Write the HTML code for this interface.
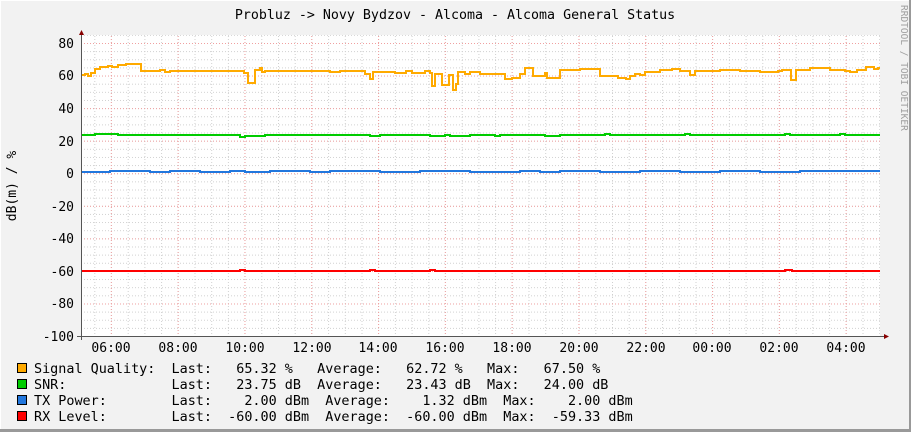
<!DOCTYPE html>
<html><head><meta charset="utf-8"><style>
html,body{margin:0;padding:0;}
body{width:911px;height:432px;overflow:hidden;background:#f2f2f2;}
svg{display:block;font-family:"DejaVu Sans Mono","Liberation Mono",monospace;}
.pre{white-space:pre;}
</style></head><body>
<svg width="911" height="432" viewBox="0 0 911 432" xmlns="http://www.w3.org/2000/svg">
<defs>
<pattern id="vmin" x="94.3" y="0" width="16.7" height="432" patternUnits="userSpaceOnUse">
<line x1="0.5" y1="0" x2="0.5" y2="432" stroke="#d0d0d0" stroke-dasharray="1,2"/></pattern>
<pattern id="hmin" x="0" y="43" width="911" height="8.14" patternUnits="userSpaceOnUse">
<line x1="0" y1="0.5" x2="911" y2="0.5" stroke="#d0d0d0" stroke-dasharray="1,2"/></pattern>
<pattern id="vmaj" x="110.8" y="0" width="66.8" height="432" patternUnits="userSpaceOnUse">
<line x1="0.5" y1="0" x2="0.5" y2="432" stroke="#f0a0a0" stroke-dasharray="1,2"/></pattern>
<pattern id="hmaj" x="0" y="43" width="911" height="32.56" patternUnits="userSpaceOnUse">
<line x1="0" y1="0.5" x2="911" y2="0.5" stroke="#f0a0a0" stroke-dasharray="1,2"/></pattern>
</defs>
<rect x="0" y="0" width="911" height="432" fill="#f2f2f2"/>
<line x1="0" y1="0.5" x2="911" y2="0.5" stroke="#fff"/>
<line x1="0.5" y1="0" x2="0.5" y2="432" stroke="#fff"/>
<line x1="0" y1="430.5" x2="911" y2="430.5" stroke="#999" stroke-width="3"/>
<line x1="910" y1="0" x2="910" y2="432" stroke="#999" stroke-width="2"/>
<rect x="81" y="35" width="799" height="301" fill="#fff"/>
<rect x="81" y="35" width="799" height="301" fill="url(#hmin)"/>
<rect x="81" y="35" width="799" height="301" fill="url(#vmin)"/>
<rect x="81" y="35" width="799" height="301" fill="url(#hmaj)"/>
<rect x="81" y="35" width="799" height="301" fill="url(#vmaj)"/>
<text x="455" y="19" font-size="13.3" text-anchor="middle" fill="#000">Probluz -&gt; Novy Bydzov - Alcoma - Alcoma General Status</text>
<text transform="translate(901,5) rotate(90)" font-size="9.5" fill="#a0a0a0">RRDTOOL / TOBI OETIKER</text>
<text transform="translate(16,186) rotate(-90)" font-size="13" text-anchor="middle" fill="#000">dB(m) / %</text>
<g font-size="13" fill="#000" text-anchor="end">
<text x="74" y="48">80</text><text x="74" y="80">60</text><text x="74" y="113">40</text>
<text x="74" y="146">20</text><text x="74" y="178">0</text><text x="74" y="211">-20</text>
<text x="74" y="243">-40</text><text x="74" y="276">-60</text><text x="74" y="308">-80</text>
<text x="74" y="341">-100</text>
</g>
<g font-size="13" fill="#000" text-anchor="middle">
<text x="111" y="352">06:00</text><text x="178" y="352">08:00</text><text x="245" y="352">10:00</text>
<text x="312" y="352">12:00</text><text x="378" y="352">14:00</text><text x="445" y="352">16:00</text>
<text x="512" y="352">18:00</text><text x="579" y="352">20:00</text><text x="646" y="352">22:00</text>
<text x="712" y="352">00:00</text><text x="779" y="352">02:00</text><text x="846" y="352">04:00</text>
</g>
<g shape-rendering="crispEdges" fill="none" stroke-width="2">
<polyline stroke="#ffaa00" points="81,75 85,75 85,74 88,74 88,76 91,76 91,73 95,73 95,69 100,69 100,67 108,67 108,66 112,66 112,67 118,67 118,65 126,65 126,64 141,64 141,71 160,71 160,70 165,70 165,72 170,72 170,71 244,71 244,73 248,73 248,83 255,83 255,70 260,70 260,68 262,68 262,72 265,72 265,71 330,71 330,72 340,72 340,71 365,71 365,74 370,74 370,79 373,79 373,72 395,72 395,73 406,73 406,71 412,71 412,73 425,73 425,71 430,71 430,73 432,73 432,86 435,86 435,74 442,74 442,85 449,85 449,75 453,75 453,90 456,90 456,84 458,84 458,72 465,72 465,74 470,74 470,72 480,72 480,74 505,74 505,79 512,79 512,78 520,78 520,74 525,74 525,68 533,68 533,76 545,76 545,73 547,73 547,78 560,78 560,70 580,70 580,69 600,69 600,76 618,76 618,78 626,78 626,79 630,79 630,76 635,76 635,74 640,74 640,75 645,75 645,72 660,72 660,70 672,70 672,69 680,69 680,71 690,71 690,75 695,75 695,71 720,71 720,70 740,70 740,71 760,71 760,72 778,72 778,71 782,71 782,70 788,70 788,70 791,70 791,80 796,80 796,70 810,70 810,68 830,68 830,70 845,70 845,71 850,71 850,72 857,72 857,70 866,70 866,67 874,67 874,69 878,69 878,68 880,68"/>
<polyline stroke="#00cc00" points="81,135 95,135 95,134 118,134 118,135 240,135 240,137 245,137 245,136 265,136 265,135 370,135 370,136 380,136 380,135 430,135 430,136 445,136 445,135 450,135 450,136 460,136 460,136 470,136 470,135 495,135 495,136 500,136 500,135 545,135 545,136 560,136 560,135 605,135 605,134 610,134 610,135 685,135 685,134 690,134 690,135 785,135 785,134 790,134 790,135 840,135 840,134 845,134 845,135 880,135"/>
<polyline stroke="#2277dd" points="81,172 110,172 110,171 150,171 150,172 170,172 170,171 200,171 200,172 230,172 230,171 245,171 245,172 270,172 270,171 310,171 310,172 330,172 330,171 380,171 380,172 420,172 420,171 470,171 470,172 520,172 520,171 540,171 540,172 560,172 560,171 600,171 600,172 640,172 640,171 680,171 680,172 720,172 720,171 760,171 760,172 800,172 800,171 880,171"/>
<polyline stroke="#ff0000" points="81,271 240,271 240,270 245,270 245,271 370,271 370,270 375,270 375,271 430,271 430,270 435,270 435,271 785,271 785,270 792,270 792,271 880,271"/>
</g>
<line x1="81.5" y1="32" x2="81.5" y2="340" stroke="#555"/>
<line x1="77" y1="336.5" x2="884" y2="336.5" stroke="#555"/>
<polygon points="79,35 84,35 81.5,30" fill="#800"/>
<polygon points="884,334 884,339 889,336.5" fill="#800"/>
<g font-size="13.45" fill="#000">
<rect x="17.5" y="363.5" width="9" height="9" fill="#ffaa00" stroke="#000"/>
<text class="pre" x="34" y="373">Signal Quality:  Last:   65.32 %   Average:   62.72 %   Max:   67.50 %</text>
<rect x="17.5" y="379.5" width="9" height="9" fill="#00cc00" stroke="#000"/>
<text class="pre" x="34" y="389">SNR:             Last:   23.75 dB  Average:   23.43 dB  Max:   24.00 dB</text>
<rect x="17.5" y="395.5" width="9" height="9" fill="#2277dd" stroke="#000"/>
<text class="pre" x="34" y="405">TX Power:        Last:    2.00 dBm  Average:    1.32 dBm  Max:    2.00 dBm</text>
<rect x="17.5" y="411.5" width="9" height="9" fill="#ff0000" stroke="#000"/>
<text class="pre" x="34" y="421">RX Level:        Last:  -60.00 dBm  Average:  -60.00 dBm  Max:  -59.33 dBm</text>
</g>
</svg>
</body></html>
